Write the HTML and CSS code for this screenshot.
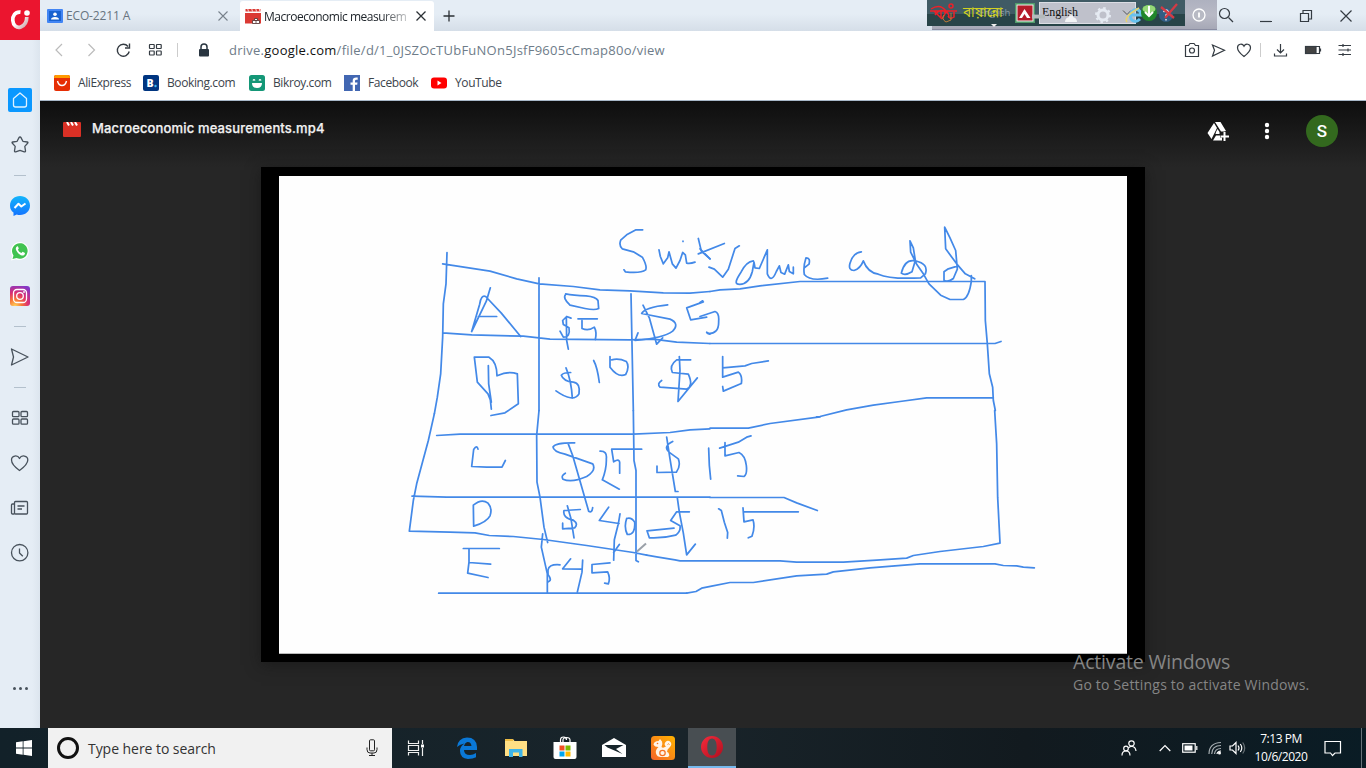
FILE: index.html
```html
<!DOCTYPE html>
<html lang="en">
<head>
<meta charset="utf-8">
<title>Macroeconomic measurements.mp4</title>
<link rel="stylesheet" href="styles.css">
</head>
<body>
<div class="desktop">
  <div class="browser">
    <nav class="sidebar">
      <div class="brand"><svg width="40" height="40" viewBox="0 0 40 40"><defs><linearGradient id="lg" x1="0" y1="0" x2="1" y2="1"><stop offset=".45" stop-color="#fff"/><stop offset="1" stop-color="#c9a0a6"/></linearGradient></defs><path d="M20.5 12.2C15 11.5 12.5 16 12.8 20.500c.4 5 4 8 8 6.500 4-1.500 6-5 6-10" fill="none" stroke="url(#lg)" stroke-width="3.700"/><circle cx="27" cy="13" r="2.800" fill="#fff"/></svg></div>
      <div class="slots">
        <div class="slot"><div class="home"><svg width="24" height="24" viewBox="0 0 24 24"><path d="M5.500 10.500 12 5l6.500 5.500V17q0 2-2 2h-9q-2 0-2-2z" fill="none" stroke="#dff2ff" stroke-width="1.300" stroke-linejoin="round"/></svg></div></div>
        <div class="slot"><svg class="line" width="20" height="20" viewBox="0 0 20 20"><path d="M10 2q.7 0 1 .6l1.900 3.700 4.300.7q1.300.3.400 1.300l-2.800 3.100.7 4.500q0 1.300-1.200.9L10 15.300l-4.300 1.500q-1.200.4-1.200-.9l.7-4.500-2.800-3.100q-.9-1 .4-1.300l4.300-.7L9 2.600q.3-.6 1-.6z"/></svg></div>
        <div class="sep"></div>
        <div class="slot"><svg width="20" height="20" viewBox="0 0 20 20"><defs><linearGradient id="ms" x2="0" y2="1"><stop stop-color="#13b5fb"/><stop offset="1" stop-color="#1473ff"/></linearGradient></defs><path d="M10 0C4.300 0 0 4 0 9.500q0 4.500 3.500 7V20l3.200-1.600Q8.300 19 10 19c5.700 0 10-4 10-9.500S15.700 0 10 0z" fill="url(#ms)"/><path d="m4.500 12 4-4.200 2.800 2.700L15.500 7.500" fill="none" stroke="#fff" stroke-width="2" stroke-linejoin="round"/></svg></div>
        <div class="slot"><svg width="20" height="20" viewBox="0 0 20 20"><path d="M1 19.500 2.300 15A9 9 0 1 1 6 18.200z" fill="#fff"/><path d="M2.500 18 3.500 14.500A7.800 7.800 0 1 1 6.500 17z" fill="#41c351"/><path d="M7 5.500q-2 1.500-.7 4 2 4 5.500 5 2.500.5 3-1.500l.2-1-2.400-1.200-1.200 1.300q-2.700-1.100-3.500-3.300l.9-1.200L7.900 5.300z" fill="#fff"/></svg></div>
        <div class="slot"><svg width="20" height="20" viewBox="0 0 20 20"><defs><radialGradient id="ig" cx=".25" cy="1" r="1.100"><stop stop-color="#ffd35a"/><stop offset=".3" stop-color="#f77737"/><stop offset=".6" stop-color="#dc2f70"/><stop offset="1" stop-color="#8338c8"/></radialGradient></defs><rect width="20" height="20" rx="3" fill="url(#ig)"/><g fill="none" stroke="#fff" stroke-width="1.300"><rect x="3.500" y="3.500" width="13" height="13" rx="3.500"/><circle cx="10" cy="10" r="3.300"/></g><circle cx="14" cy="6" r=".9" fill="#fff"/></svg></div>
        <div class="sep"></div>
        <div class="slot"><svg class="line" width="20" height="20" viewBox="0 0 20 20"><path d="M1.500 2 18 10 1.500 18l2-8z"/></svg></div>
        <div class="sep"></div>
        <div class="slot"><svg class="line" width="18" height="18" viewBox="0 0 18 18"><g><rect x="1.500" y="2.500" width="6.500" height="5.200" rx="1"/><rect x="10" y="2.500" width="6.500" height="5.200" rx="1"/><rect x="1.500" y="10" width="6.500" height="5.200" rx="1"/><rect x="10" y="10" width="6.500" height="5.200" rx="1"/></g></svg></div>
        <div class="slot"><svg class="line" width="20" height="20" viewBox="0 0 20 20"><path d="M9.500 17.500C4 13.500 1.500 10.500 1.500 7c0-4.500 6-5.500 8-1.500C11.500 1.500 17.800 2.500 17.800 7c0 3.500-2.800 6.500-8.300 10.500z"/></svg></div>
        <div class="slot"><svg class="line" width="20" height="20" viewBox="0 0 20 20"><rect x="4.500" y="3.500" width="13" height="12.500" rx="1"/><path d="M4.500 6H2.500q-1 0-1 1v8q0 1 1 1h2M7.500 8h7M7.500 11h4.500"/></svg></div>
        <div class="slot"><svg class="line" width="20" height="20" viewBox="0 0 20 20"><circle cx="9.700" cy="9.700" r="8.200"/><path d="M9.500 5.500V10l3.300 3.200"/></svg></div>
      </div>
      <div class="more"><i></i><i></i><i></i></div>
    </nav>
    <main class="main">
      <header class="tabs">
        <div class="tab"><svg width="16" height="14" viewBox="0 0 16 14"><rect width="16" height="14" rx="1" fill="#4285f4"/><rect x="2" y="2" width="12" height="10" fill="#1a62cf"/><circle cx="8" cy="5.200" r="1.800" fill="#fff"/><path d="M4 10.500Q4 8 8 8t4 2.500z" fill="#fff"/></svg><span class="label eco">ECO-2211 A</span><svg class="x" width="12" height="12" viewBox="0 0 12 12"><path d="m1.500 1.500 9 9m0-9-9 9"/></svg></div>
        <div class="tab active"><svg width="16" height="16" viewBox="0 0 16 16"><path d="M0 5h16v10.500H0z" fill="#db3a34"/><path d="M.5 1h15v2.500H.5z" fill="#db3a34"/><path d="m2.500 0 1 3.500M6.500 0l1 3.500M10.500 0l1 3.500M14 0l1 3.500" stroke="#fff" stroke-width=".8"/><path d="M7.500 12.500h7v3h-7zM9.500 12v-1.500h3V12M11 12v3" fill="#fff" stroke="#4c3030" stroke-width=".8"/></svg><span class="label fade">Macroeconomic measurem</span><svg class="x dark" width="12" height="12" viewBox="0 0 12 12"><path d="m1.500 1.500 9 9m0-9-9 9"/></svg></div>
        <svg class="x dark plus" width="12" height="12" viewBox="0 0 12 12"><path d="M6 .5v11M.5 6h11"/></svg>
        <div class="winbtns">
          <svg width="40" height="30" viewBox="0 0 40 30"><circle cx="18.500" cy="12.500" r="5"/><path d="m22.500 16.500 4.500 4.500"/></svg>
          <svg width="40" height="30" viewBox="0 0 40 30"><path d="M14 20.500h12"/></svg>
          <svg width="40" height="30" viewBox="0 0 40 30"><path d="M14.500 12.500h8v8h-8zM17 12V9.500h8.500V18H23"/></svg>
          <svg width="40" height="30" viewBox="0 0 40 30"><path d="m14.500 9.500 11 11m0-11-11 11"/></svg>
        </div>
        <div class="langbar">
          <svg class="back" width="290" height="31" viewBox="0 0 290 31"><defs><linearGradient id="gr" x2="0" y2="1"><stop stop-color="#aeb1bf"/><stop offset=".5" stop-color="#b9bac6"/><stop offset="1" stop-color="#a5a7b5"/></linearGradient></defs><rect x="5" width="285" height="30" fill="url(#gr)"/><path d="M0 0h258v26H0z" fill="#284448"/><path d="M0 0h258v14H0z" fill="#405b65"/><path d="M5 29.500h285" stroke="#8a8da2"/></svg>
          <svg class="bijoy" width="27" height="20" viewBox="0 0 27 20"><g fill="none" stroke="#ef2028" stroke-width="1.500"><path d="M1 6q9-6 15 2M0 8h27M4 8l7 7V8M5 12q5-7 11-3l-4 7M14 9q5-1 5 6M24 9v5q-4 3-6-1"/><circle cx="21" cy="3" r="2"/></g><path d="M14 12q-3 4 2 7l5-2v-7" fill="none" stroke="#bc7b39"/></svg>
          <span class="ghost">English</span><span class="bangla">বায়ান্নো</span><i class="drop"></i>
          <svg class="logo-a" width="20" height="20" viewBox="0 0 20 20"><rect width="20" height="20" fill="#4f9b69"/><rect x="1.500" y="1.500" width="17" height="17" fill="#eee"/><rect x="2.500" y="2.500" width="15" height="15" fill="#b51c2a"/><path d="m4 15 5.500-9 6 9h-3.500l-2.500-4-2.500 4z" fill="#fff"/></svg>
          <div class="select">English</div>
          <svg class="tools" width="126" height="26" viewBox="0 0 126 26"><path d="M-5 18.500H8v-4H-5z" fill="#b4babc"/><path d="M28 22q0-4 4-5 0-3 2-3t2 3q4 1 4 5z" fill="#fff" opacity=".8"/><circle cx="66" cy="15" r="5" fill="none" stroke="#e5eaf2" stroke-width="3"/><circle cx="66" cy="15" r="7" fill="none" stroke="#e5eaf2" stroke-width="2" stroke-dasharray="2.500 3"/><path d="m86 10.500 4 4 4-4" fill="none" stroke="#555"/><path d="M93 15h11q-1-7-7-5-5 3-3 9 4 5 9 0" fill="none" stroke="#68c2ee" stroke-width="3"/><path d="M90 22Q86 17 102 8" fill="none" stroke="#e8d36c" stroke-width="1.500"/></svg>
          <svg class="orbs" width="60" height="26" viewBox="0 0 60 26"><circle cx="12" cy="13" r="8" fill="#20872a"/><ellipse cx="12" cy="9" rx="6.500" ry="4" fill="#96d878"/><path d="M12 6v10m-4-4 4 4 4-4" fill="none" stroke="#fff" stroke-width="2"/><circle cx="29" cy="15" r="7" fill="#315d84"/><path d="M26.500 12q3-4 5 0 0 2-2.500 3v2m0 2v1.500" fill="none" stroke="#e0e5ee" stroke-width="1.500"/><path d="m24 7 13 11M40 4 28 18" stroke="#d33b45" stroke-width="2.300"/></svg>
          <svg class="info" width="14" height="14" viewBox="0 0 14 14"><circle cx="7" cy="7" r="6" fill="#b8bac4" stroke="#fff" stroke-width="1.300"/><path d="M7 4.500v5" stroke="#fff" stroke-width="1.800"/></svg>
        </div>
      </header>
      <div class="address">
        <svg class="nav" width="32" height="24" viewBox="0 0 32 24"><path d="m18 6-6 6 6 6" stroke="#bbb"/></svg>
        <svg class="nav" width="32" height="24" viewBox="0 0 32 24"><path d="m12.500 6 6 6-6 6" stroke="#bbb"/></svg>
        <svg class="nav" width="32" height="24" viewBox="0 0 32 24"><path d="M20 8.500a6 6 0 1 0 1.200 5M21.500 5.500V10H17" stroke-width="1.400"/></svg>
        <svg class="nav" width="32" height="24" viewBox="0 0 32 24"><g><rect x="9.500" y="6.500" width="4.700" height="4" rx=".5"/><rect x="16.500" y="6.500" width="4.700" height="4" rx=".5"/><rect x="9.500" y="13" width="4.700" height="4" rx=".5"/><rect x="16.500" y="13" width="4.700" height="4" rx=".5"/></g></svg>
        <i class="vline"></i>
        <svg class="lock" width="12" height="14" viewBox="0 0 12 14"><rect x="1" y="6" width="10" height="7.500" rx="1" fill="#293540"/><path d="M3 6.500V4q0-3 3-3t3 3v2.500" fill="none" stroke="#293540" stroke-width="1.500"/></svg>
        <span class="url">drive.<b>google.com</b>/file/d/1_0JSZOcTUbFuNOn5JsfF9605cCmap80o/view</span>
        <div class="actions">
          <svg width="26" height="24" viewBox="0 0 26 24"><path d="M6.500 7.500h3l1.500-2h4l1.500 2h3v11h-13z"/><circle cx="13" cy="12.500" r="2.500"/></svg>
          <svg width="26" height="24" viewBox="0 0 26 24"><path d="m7.500 7 12 5.200L7.500 18l2-5.800z"/></svg>
          <svg width="26" height="24" viewBox="0 0 26 24"><path d="M13 18.500C8.500 15 6.500 12.500 6.500 9.700c0-4 5-4.700 6.500-1.500 1.500-3.200 6.500-2.500 6.500 1.500 0 2.800-2 5.300-6.500 8.800z"/></svg>
          <i class="vline"></i>
          <svg width="38" height="24" viewBox="0 0 38 24"><path d="M19.500 6v9M16 11.500l3.500 3.500 3.500-3.500M13.500 15.500v2.500h12v-2.500"/></svg>
          <svg width="28" height="24" viewBox="0 0 28 24"><rect x="6.500" y="8.500" width="10.500" height="7" fill="#444"/><path d="M17 8.500h3.500v7H17M21.500 10.500v3"/></svg>
          <svg width="36" height="24" viewBox="0 0 36 24"><path d="M11.500 7.500H24M11.500 12H24M11.500 16.500H24M16 6v3M21 10.500v3M16 15v3"/></svg>
        </div>
      </div>
      <div class="bookmarks">
        <a class="b1"><svg width="16" height="16" viewBox="0 0 16 16"><rect width="16" height="16" rx="2" fill="#e62e04"/><path d="M2 0h12q2 0 2 3H0q0-3 2-3z" fill="#ff9a00"/><path d="M3.500 6q1 4.500 4.500 4.500T12.500 6" fill="none" stroke="#fff" stroke-width="1.400"/></svg>AliExpress</a>
        <a class="b2"><svg width="16" height="16" viewBox="0 0 16 16"><rect width="16" height="16" rx="2" fill="#003580"/><text x="3.500" y="12" font-family="Open Sans" font-weight="800" font-size="10.500" fill="#fff">B</text><circle cx="12.500" cy="11" r="1.200" fill="#39b4f1"/></svg>Booking.com</a>
        <a class="b3"><svg width="16" height="16" viewBox="0 0 16 16"><rect width="16" height="16" rx="2.500" fill="#149777"/><path d="M3 8h10q0 5-5 5T3 8z" fill="#fff"/><path d="M4 5.500q1-1.500 2 0M10 5.500q1-1.500 2 0" fill="none" stroke="#fff" stroke-width="1.300"/></svg>Bikroy.com</a>
        <a class="b4"><svg width="16" height="16" viewBox="0 0 16 16"><rect width="16" height="16" fill="#4267b2"/><path d="M11 16V9.800h2.200l.3-2.300H11V6q0-1.200 1.300-1.200h1.400V2.600q-5-.7-5 3v1.900H6.500v2.300h2.200V16z" fill="#fff"/></svg>Facebook</a>
        <a class="b5"><svg width="16" height="16" viewBox="0 0 16 16"><rect y="2.500" width="16" height="11" rx="3" fill="#f00"/><path d="m6.500 5.500 4 2.500-4 2.500z" fill="#fff"/></svg>YouTube</a>
      </div>
      <section class="viewer">
        <div class="filebar">
          <svg class="clap" width="18" height="15" viewBox="0 0 18 15"><rect width="18" height="15" rx="1" fill="#d93025"/><path d="m4 0 2 3.500M8 0l2 3.500M12 0l2 3.500" stroke="#fff" stroke-width="2"/></svg>
          <h1>Macroeconomic measurements.mp4</h1>
          <svg class="drive" width="24" height="22" viewBox="0 0 24 22"><path d="M9 2h5.500l5.500 9-2 .5h-3L9 2zM8 3l3 5-5.500 11L1.500 13zM7 20.500l3-5h4v2h2v3zM10 12l1.500-3 2 3v2h-4z" fill="#fff"/><path d="M18.500 12v9M14.500 16.500h8.500" stroke="#fff" stroke-width="2"/></svg>
          <svg class="dots" width="6" height="18" viewBox="0 0 6 18"><g fill="#fff"><circle cx="3" cy="3" r="2.200"/><circle cx="3" cy="9" r="2.200"/><circle cx="3" cy="15" r="2.200"/></g></svg>
          <div class="avatar">S</div>
        </div>
        <div class="video">
          <svg class="board" width="848" height="477" viewBox="279 175.500 848 477">
            <g class="ink">
              <g transform="translate(400 220) scale(.33333)">
                <path d="M141 96 138 190 130 250 128 350 122 460 112 530 103 580M128 130 270 152 350 175 418 190 520 198 600 208 690 211 790 217 870 218 930 213M417 172V570M693 220 697 420 700 570M128 337 215 343 370 347 450 356 690 358 760 356 830 365 930 369"/>
                <path d="M728 28H708L680 43 662 59Q656 76 667 85L700 94 727 110Q742 137 737 148 722 159 676 154L672 148M777 88 781 108 790 130 803 112 807 94 817 130 828 143 840 120 848 96 856 103 860 128Q872 130 885 125M849 62v1M895 54 904 92 930 115"/>
                <path d="M271 202 259 242 215 333M215 333 239 251Q243 222 257 228L304 278 362 348M235 288H290"/>
                <path d="M497 220Q520 225 558 226 588 229 594 240L596 264Q585 270 555 264L510 254Q487 232 497 222M513 293 500 288 488 300 490 312 507 322Q512 350 490 350L480 332M499 290 500 360 505 386M534 295H592M546 300V324Q565 333 583 320 591 335 586 357"/>
                <path d="M803 253Q735 260 725 279L810 296Q840 309 818 332 790 353 705 360L714 337M729 254 748 292 770 371 788 352M910 244 860 262 872 298 920 290M920 335 930 341"/>
                <path d="M274 566 271 538 264 520 232 485 223 410H267Q291 424 291 466 325 450 352 460L355 550 315 577 273 585M265 435 266 490 274 545"/>
                <path d="M512 456Q490 456 484 464 490 482 520 485 542 488 537 520 520 548 468 511M498 442Q514 480 517 533M581 420Q592 440 598 486M630 408V440Q655 473 677 462 690 438 679 423 656 412 635 418M872 418H830Q807 435 817 456L865 461Q881 497 860 506L780 500Q770 490 785 480M838 408 840 450 834 543 892 472"/>
              </g>
              <g transform="translate(700 210) scale(.33333)">
                <path d="M30 243 60 238 120 235 180 226 300 213H855L856 330 862 400 868 490 878 530 880 570 886 600M30 399H885L903 393M350 619 360 618 440 598 520 584 600 573 680 562H880"/>
                <path d="M0 115 30 145M-5 130 73 99M27 170 43 176 68 200 85 176 105 114 118 106M160 151Q139 153 123 185 100 219 114 221 146 225 157 183L162 155 165 172 178 174 202 118 202 190Q214 220 229 183L238 166 243 186 254 191 265 163 268 183 280 190V170M312 173 327 161Q332 142 318 142 309 169 313 192 330 213 383 203"/>
                <path d="M484 124Q460 126 450 158 444 180 462 180 481 174 490 151 503 186 535 191 570 207 662 202L676 190Q687 160 646 151 614 144 604 188 615 197 636 184L646 150 640 112 630 91 632 125 650 161 670 190 687 220 722 254 750 267H790Q807 261 814 213V195M824 205 796 190 770 160 737 115 734 50 750 82 767 120 772 176 760 204Q744 217 732 209V184L745 175 772 167"/>
                <path d="M0 276 8 271M0 318 45 303Q58 307 56 332 57 372 22 369M68 438V500L115 485Q128 495 124 519L70 542 68 528M68 472 135 466 155 459 205 451"/>
              </g>
              <g transform="translate(400 410) scale(.33333)">
                <path d="M103 10 85 90 50 220 40 270 28 362 150 365 225 367 268 375 340 378 430 387 560 405 700 426 740 434M417 0 410 75 411 215 420 260 432 350 443 396M428 370 424 410 442 490V548M700 0 702 150 708 180V450L715 454M110 75 180 71H700L810 66 870 58 930 55M36 257 140 260H930M116 548H860"/>
                <path d="M234 116Q231 102 221 117L215 168 260 170H306L316 150M221 347 220 284Q245 263 264 278 278 294 270 316 260 335 221 347M190 414H298M207 414V455L203 488 264 501M207 456 272 461"/>
                <path d="M524 97Q467 96 459 109 460 123 495 131L578 160Q590 179 560 198 515 218 489 206 482 196 496 188M505 101 518 135 566 302Q576 309 578 291M600 122Q622 121 619 145 620 175 607 208L658 236M725 116H635L641 154Q661 142 659 160V188M818 93Q788 108 807 125L835 145Q843 167 829 185L771 186V167M800 80 810 145 826 243H834M541 297 492 300Q487 322 520 329 536 340 524 352L488 355V338M502 286 513 325 522 382M626 290 598 330 657 339M660 310 655 340 643 388 641 449M658 402 641 426M680 324Q671 350 682 372 707 373 704 335 694 319 680 324"/>
                <path d="M480 463Q448 460 444 478V492Q458 510 444 514M512 445 488 475 545 476M548 449 546 485 532 545M630 457 576 462V487L623 484Q632 503 625 520L614 518"/>
              </g>
              <g transform="translate(630 410) scale(.33333)">
                <path d="M1094 0 1100 100 1103 260 1110 398 1060 408 930 423 850 435 830 443 740 449 640 455H500L450 451H150L135 448 80 439 50 434M240 53H355L420 39 570 19M240 261H462L500 277 562 300M170 548 198 543 215 533 245 527 300 516H370L500 496 590 491 610 484 720 472 870 460H1095L1120 465 1160 466 1180 470 1213 472"/>
                <path d="M236 113 238 165 242 206M363 76 350 80 325 95 269 113M285 96V136L327 126Q345 134 349 165 352 192 342 198L323 196M266 295 274 300 283 335 293 366 292 383M505 304H340M339 292 342 334 369 328Q376 351 366 377L355 382M178 304H140L122 330 150 346Q153 363 137 374 100 384 58 382L51 361 132 353M142 262 148 305 160 368 170 433 196 401"/>
              </g>
            </g>
            <path d="m637 551 9-8" stroke="#9aa0a8" stroke-width="2"/>
          </svg>
        </div>
      </section>
    </main>
    <div class="activate"><p class="big">Activate Windows</p><p class="small">Go to Settings to activate Windows.</p></div>
  </div>
  <footer class="taskbar">
    <div class="start"><svg width="16" height="16" viewBox="0 0 16 16"><path d="M0 2.200 6.700 1.300V7.600H0zM7.500 1.200 16 0v7.600H7.500zM0 8.400h6.700v6.300L0 13.800zM7.500 8.400H16V16l-8.500-1.200z" fill="#fff"/></svg></div>
    <div class="search"><i class="cortana"></i><span>Type here to search</span><svg width="12" height="18" viewBox="0 0 12 18"><g fill="none" stroke="#222"><rect x="3.500" y=".8" width="5" height="11" rx="1"/><path d="M1 8.500v2q0 3.500 3 3.500h4q3 0 3-3.500v-2M6 14v3M3 16.500h6"/></g></svg></div>
    <div class="app view"><svg width="18" height="16" viewBox="0 0 18 16"><path d="M1.500.5v3h10v-3M1.500 15.500v-3h10v3M1.500 5.500h10v5h-10zM15.500 0v4M15.500 8v8" fill="none" stroke="#eee" stroke-width="1.200"/><path d="M14 4.500h3v3h-3z" fill="#fff"/></svg></div>
    <div class="app"><svg width="22" height="22" viewBox="0 0 22 22"><path d="M1 10Q2 1 11 .5 20.500.5 21 10v3H8q0 5 6 5 3 0 6-2v4.200Q17 22 12 22 4 21 4 14q0-5 4.500-7.500Q4 7 1 10zM8 9h7.500Q15 4.800 11.500 5 9 5.500 8 9z" fill="#0a78d7"/></svg></div>
    <div class="app"><svg width="22" height="20" viewBox="0 0 22 20"><path d="M0 1h8l1.500 2H22v15H0z" fill="#ffdf84"/><path d="M0 1h8v2H0z" fill="#eebc44"/><path d="M4 19v-8h13.500v8H14v-4.500H8V19z" fill="#3fb4e8"/></svg></div>
    <div class="app"><svg width="24" height="24" viewBox="0 0 24 24"><path d="M.5 6h23v15q0 2-2 2h-19q-2 0-2-2z" fill="#fff"/><path d="M7.500 8V4q0-3 3-3t3 3M10 7V4q0-2.500 3.500-2.500T17 4v4" fill="none" stroke="#fff" stroke-width="1.200"/><path d="M6.500 9.500h5v5h-5z" fill="#f25022"/><path d="M12.500 9.500h5v5h-5z" fill="#7fba00"/><path d="M6.500 15.500h5v5h-5z" fill="#00a4ef"/><path d="M12.500 15.500h5v5h-5z" fill="#ffb900"/></svg></div>
    <div class="app"><svg width="24" height="20" viewBox="0 0 24 20"><path d="M0 7 12 0l12 7v12H0z" fill="#fff"/><path d="M2.500 7h19L14 11l6.500 5-15-6.500z" fill="#17252b"/></svg></div>
    <div class="app"><svg width="24" height="24" viewBox="0 0 24 24"><defs><linearGradient id="uc" x1="0" y1="1" x2="1" y2="0"><stop stop-color="#f5632a"/><stop offset="1" stop-color="#ffb400"/></linearGradient></defs><rect width="24" height="24" rx="3.500" fill="url(#uc)"/><path d="M9 3 7.500 5Q3 5 2.500 8.500q1 2.500 5 2.500-3.500 3-2.500 6.500Q6 21 10 21h7q2-1 1-3-.5-2-2-2 0-3 2.500-4.500 3-3 1-5.500Q17 3.500 14.500 6q-2 2.500.5 4.500-3 2-4.500.5Q12 8 11 5.500z" fill="#fff4e8"/><circle cx="11.500" cy="17" r="2.700" fill="none" stroke="#f57022" stroke-width="1.200"/><circle cx="6.500" cy="7.500" r=".8" fill="#f57022"/><path d="M16.500 8.500q1.500-1.500 2 0" fill="none" stroke="#f99020"/></svg></div>
    <div class="app opera"><svg width="22" height="22" viewBox="0 0 22 22"><defs><linearGradient id="op" x2="1" y2="1"><stop stop-color="#f72b3c"/><stop offset="1" stop-color="#ae0f1e"/></linearGradient></defs><path fill-rule="evenodd" d="M11 0a11 11 0 1 0 0 22 11 11 0 1 0 0-22zm0 2.500c3.200 0 4.700 3.500 4.700 8.500S14.200 19.500 11 19.500 6.300 16 6.300 11 7.800 2.500 11 2.500z" fill="url(#op)"/></svg></div>
    <div class="tray">
      <svg width="16" height="16" viewBox="0 0 16 16"><circle cx="10.500" cy="3.500" r="2.700"/><circle cx="5" cy="8.500" r="2.300"/><path d="M1 15.500q0-4.500 4-4.500t4 4.500M7.500 8q1.500-2 4-1.500Q14.500 7 15 11"/></svg>
      <svg class="chev" width="12" height="12" viewBox="0 0 12 12"><path d="m.7 9 5.300-5.500L11.300 9"/></svg>
      <svg class="bat" width="16" height="10" viewBox="0 0 16 10"><rect x=".7" y=".7" width="12.500" height="8.500"/><path d="M14.800 3v4"/><path d="M2.500 2.500h8v5h-8z" fill="#fff" stroke="none"/></svg>
      <svg class="wifi" width="14" height="14" viewBox="0 0 14 14"><path d="M1 13Q1 2 13 1.500M3.700 13Q4 4.500 13 4.500M6.500 13Q7 7.500 13 7.500" stroke="#a6adb1"/><path d="M9 13q.5-3 4-3"/><circle cx="11.500" cy="12" r="1.500" fill="#fff" stroke="none"/></svg>
      <svg class="vol" width="17" height="14" viewBox="0 0 17 14"><path d="M1 5h2.500L7 1.500v11L3.500 9H1z"/><path d="M9 4.500q2 2.500 0 5M11.300 3q3 4 0 8"/><path d="M13.700 1.500q4 5.500 0 11" stroke="#697276"/></svg>
      <div class="clock"><span>7:13 PM</span><span>10/6/2020</span></div>
      <svg class="note" width="18" height="17" viewBox="0 0 18 17"><path d="M1 1.500h15.500v11.500h-5.500L8.500 15.500 6.500 13H1z"/></svg>
      <i class="show"></i>
    </div>
  </footer>
</div>
</body>
</html>
```
FILE: styles.css
```css
* { box-sizing: border-box; }
body { margin: 0; font-family: "Open Sans", "Noto Sans", sans-serif; overflow: hidden; }
svg { display: block; flex: none; }
.desktop { width: 1366px; height: 768px; display: flex; flex-direction: column; }
.browser { position: relative; height: 728px; display: flex; }
.sidebar { width: 40px; background: linear-gradient(90deg, #e5edf5 80%, #dce5ee); display: flex; flex-direction: column; }
.brand { height: 40px; background: #eb152f; }
.slots { padding-top: 37.5px; flex: 1; }
.slot { height: 45px; display: flex; align-items: center; justify-content: center; }
.home { background: #0a98ff; border-radius: 2px; }
.sep { height: 16px; display: flex; align-items: center; justify-content: center; }
.sep::before { content: ""; width: 12px; height: 1px; background: #b3c0cc; }
.line { fill: none; stroke: #48525c; stroke-width: 1.3; stroke-linejoin: round; }
.more { height: 80px; display: flex; justify-content: center; align-items: center; gap: 3px; }
.more i { width: 3px; height: 3px; border-radius: 50%; background: #48525c; }
.main { width: 1326px; display: flex; flex-direction: column; }
.tabs { position: relative; height: 31px; background: linear-gradient(#e5edf5 45%, #d5dee8); display: flex; align-items: center; }
.tab { height: 31px; width: 200px; display: flex; align-items: center; padding: 0 11px 0 7px; font-size: 12px; color: #68747f; }
.tab.active { width: 194px; background: #fff; border-radius: 3px 3px 0 0; padding: 0 7px 0 5px; color: #20262c; margin-top: 1px; }
.label { margin-left: 3px; flex: 1; white-space: nowrap; }
.eco { letter-spacing: -.15px; }
.fade { flex: none; width: 145px; margin-right: 6px; letter-spacing: -.48px; -webkit-mask-image: linear-gradient(90deg, #000 80%, #0003); mask-image: linear-gradient(90deg, #000 80%, #0003); }
.x { fill: none; stroke: #78828c; stroke-width: 1.1; }
.dark { stroke: #2b3035; stroke-width: 1.3; }
.plus { margin-left: 9px; }
.winbtns { margin-left: auto; display: flex; fill: none; stroke: #343b42; stroke-width: 1.2; }
.langbar { position: absolute; left: 887px; top: 0; width: 290px; height: 31px; font-family: "Liberation Serif", serif; }
.langbar > * { position: absolute; }
.back { left: 0; top: 0; }
.bijoy { left: 3px; top: 3px; }
.bangla { left: 36px; top: 4px; font: 13.5px/20px "Noto Sans Bengali", "Noto Sans", sans-serif; color: #d2d222; white-space: nowrap; }
.ghost { left: 52px; top: 6px; font: 9.5px/14px "Open Sans", sans-serif; color: #8b9ca6; }
.drop { left: 64px; top: 24px; border: 3px solid transparent; border-top-color: #eee; }
.logo-a { left: 88px; top: 3px; }
.select { left: 112px; top: 2px; width: 97px; height: 22px; background: #bfc1cb; border: 1px solid #dcdde4; padding-left: 2px; font-size: 12px; line-height: 18px; letter-spacing: -.1px; color: #111; }
.tools { left: 110px; top: 0; overflow: visible; }
.orbs { left: 210px; top: 0; }
.info { left: 265px; top: 8px; }
.address { height: 37px; background: #fff; display: flex; align-items: center; padding-left: 4px; }
.nav, .actions { fill: none; stroke: #343b42; stroke-width: 1.2; }
.vline { width: 1px; height: 14px; background: #ccc; }
.nav + .vline { margin-left: 5px; }
.lock { margin-left: 20px; }
.url { margin-left: 19px; font-size: 13px; color: #6e7c89; letter-spacing: .25px; white-space: nowrap; }
.url b { font-weight: 400; color: #111; }
.actions { margin-left: auto; display: flex; align-items: center; padding-right: 3px; }
.actions .vline { margin-left: 3px; }
.bookmarks { height: 33px; background: #fff; border-bottom: 1px solid #a8b8c8; display: flex; align-items: center; padding: 0 0 3px 14px; font-size: 12px; color: #3c444c; letter-spacing: -.4px; }
.bookmarks a { display: flex; align-items: center; gap: 8px; white-space: nowrap; }
.b1 { width: 89px; } .b2 { width: 106px; } .b3 { width: 95px; } .b4 { width: 87px; }
.viewer { flex: 1; background: linear-gradient(#0e0e0e, #262626 66px); display: flex; flex-direction: column; align-items: center; }
.filebar { height: 66px; width: 100%; display: flex; align-items: center; padding: 0 28px 6px 23px; }
.filebar h1 { margin: 0 0 6px 11px; flex: 1; font: 500 13px/20px Inter, sans-serif; color: #f1f1f1; letter-spacing: .15px; -webkit-text-stroke: .25px #f1f1f1; }
.clap { margin-bottom: 4px; }
.dots { margin: 0 36px 0 34px; }
.avatar { width: 32px; height: 32px; border-radius: 50%; background: #33691e; color: #fff; display: grid; place-items: center; font: 500 17px Roboto, sans-serif; }
.video { width: 884px; height: 495px; background: #000; padding: 9px 18px; box-shadow: 0 3px 14px #1118; }
.board { background: #fefefe; box-shadow: 0 1px #bbb; }
.ink { fill: none; stroke: #4389e8; stroke-width: 5.2; stroke-linecap: round; stroke-linejoin: round; }
.activate { position: absolute; left: 1073px; top: 649px; color: #858585; white-space: nowrap; }
.activate p { margin: 0; }
.big { font-size: 19.5px; line-height: 26px; letter-spacing: -.18px; }
.small { font-size: 14px; line-height: 20px; letter-spacing: .2px; }
.taskbar { height: 40px; background: linear-gradient(90deg, #122129, #19242a 50%, #121a1f 75%, #0a1c25); display: flex; color: #fff; }
.start { width: 48px; display: grid; place-items: center; }
.search { width: 344px; background: #f1f1f1; display: flex; align-items: center; padding: 0 14px 0 9px; color: #333; font-size: 14px; letter-spacing: -.05px; }
.search span { flex: 1; margin-left: 9px; }
.cortana { width: 22px; height: 22px; border: 3px solid #111; border-radius: 50%; }
.app { width: 49px; display: grid; place-items: center; }
.view { width: 50px; padding-right: 3px; }
.opera { width: 48px; margin-left: 1px; background: #484e52; border-bottom: 2px solid #76b9ed; }
.tray { margin-left: auto; display: flex; align-items: center; fill: none; stroke: #fff; stroke-width: 1.2; }
.chev { margin-left: 22px; } .bat { margin-left: 11px; } .wifi { margin-left: 10px; } .vol { margin-left: 7px; }
.clock { width: 70px; display: flex; flex-direction: column; align-items: center; font-size: 12px; line-height: 18px; letter-spacing: -.45px; }
.note { margin-left: 8px; }
.show { width: 1px; height: 40px; background: #66737a; margin: 0 4px 0 19px; }
```
